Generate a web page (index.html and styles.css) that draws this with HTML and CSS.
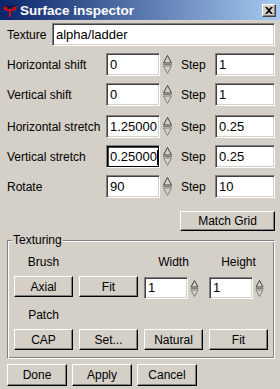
FILE: index.html
```html
<!DOCTYPE html>
<html>
<head>
<meta charset="utf-8">
<link rel="stylesheet" href="styles.css">
</head>
<body>
<div class="win">
  <div class="titlebar">
    <svg class="appicon" width="16" height="16" viewBox="0 0 16 16">
      <path d="M1 2 L3 5 L5 3 L6 7 L10 7 L11 3 L13 5 L15 2 L14 8 L9 9 L9 15 L7 15 L7 9 L2 8 Z" fill="#d01010"/>
      <path d="M1 2 L3 5 L5 3 L6 7 M10 7 L11 3 L13 5 L15 2" fill="none" stroke="#101050" stroke-width="1"/>
      <rect x="5" y="4" width="6" height="2" fill="#101050"/>
    </svg>
    <span class="title">Surface inspector</span>
    <span class="close">
      <svg width="8" height="7" viewBox="0 0 8 7"><path d="M0 0 L2 0 L4 2 L6 0 L8 0 L5 3.5 L8 7 L6 7 L4 5 L2 7 L0 7 L3 3.5 Z" fill="#000"/></svg>
    </span>
  </div>
  <div class="content">
    <div class="texrow">
      <span class="lbl">Texture</span>
      <div class="field">alpha/ladder</div>
    </div>

    <div class="prow">
      <span class="lbl">Horizontal shift</span>
      <div class="field">0</div>
      <svg class="spin" width="11" height="21" viewBox="0 0 11 21"><path d="M5.5 1.5 L9.5 9 L1.5 9 Z" fill="#d4d0c8" stroke="#404040"/><path d="M1.5 12 L9.5 12 L5.5 19.5 Z" fill="#d4d0c8" stroke="#808080"/><path d="M1 10.5 L10 10.5" stroke="#808080"/></svg>
      <span class="step">Step</span>
      <div class="field">1</div>
    </div>

    <div class="prow">
      <span class="lbl">Vertical shift</span>
      <div class="field">0</div>
      <svg class="spin" width="11" height="21" viewBox="0 0 11 21"><path d="M5.5 1.5 L9.5 9 L1.5 9 Z" fill="#d4d0c8" stroke="#404040"/><path d="M1.5 12 L9.5 12 L5.5 19.5 Z" fill="#d4d0c8" stroke="#808080"/><path d="M1 10.5 L10 10.5" stroke="#808080"/></svg>
      <span class="step">Step</span>
      <div class="field">1</div>
    </div>

    <div class="prow gap2">
      <span class="lbl">Horizontal stretch</span>
      <div class="field">1.25000</div>
      <svg class="spin" width="11" height="21" viewBox="0 0 11 21"><path d="M5.5 1.5 L9.5 9 L1.5 9 Z" fill="#d4d0c8" stroke="#404040"/><path d="M1.5 12 L9.5 12 L5.5 19.5 Z" fill="#d4d0c8" stroke="#808080"/><path d="M1 10.5 L10 10.5" stroke="#808080"/></svg>
      <span class="step">Step</span>
      <div class="field">0.25</div>
    </div>

    <div class="prow">
      <span class="lbl">Vertical stretch</span>
      <div class="field focus">0.25000<span class="caret"></span></div>
      <svg class="spin" width="11" height="21" viewBox="0 0 11 21"><path d="M5.5 1.5 L9.5 9 L1.5 9 Z" fill="#d4d0c8" stroke="#404040"/><path d="M1.5 12 L9.5 12 L5.5 19.5 Z" fill="#d4d0c8" stroke="#808080"/><path d="M1 10.5 L10 10.5" stroke="#808080"/></svg>
      <span class="step">Step</span>
      <div class="field">0.25</div>
    </div>

    <div class="prow">
      <span class="lbl">Rotate</span>
      <div class="field">90</div>
      <svg class="spin" width="11" height="21" viewBox="0 0 11 21"><path d="M5.5 1.5 L9.5 9 L1.5 9 Z" fill="#d4d0c8" stroke="#404040"/><path d="M1.5 12 L9.5 12 L5.5 19.5 Z" fill="#d4d0c8" stroke="#808080"/><path d="M1 10.5 L10 10.5" stroke="#808080"/></svg>
      <span class="step">Step</span>
      <div class="field">10</div>
    </div>

    <div class="gridrow">
      <div class="btn matchgrid">Match Grid</div>
    </div>

    <div class="group">
      <span class="legend">Texturing</span>
      <div class="ggrid">
        <span class="glbl">Brush</span>
        <span></span>
        <span class="glbl">Width</span>
        <span class="glbl">Height</span>
      </div>
      <div class="ggrid brow">
        <div class="btn">Axial</div>
        <div class="btn">Fit</div>
        <div class="spinbox">
          <div class="field small">1</div>
          <svg class="spin" width="9" height="21" viewBox="0 0 9 21"><path d="M4.5 2.5 L8 9 L1 9 Z" fill="#d4d0c8" stroke="#404040"/><path d="M1 12 L8 12 L4.5 18.5 Z" fill="#d4d0c8" stroke="#808080"/><path d="M0.5 10.5 L8.5 10.5" stroke="#808080"/></svg>
        </div>
        <div class="spinbox">
          <div class="field small">1</div>
          <svg class="spin" width="9" height="21" viewBox="0 0 9 21"><path d="M4.5 2.5 L8 9 L1 9 Z" fill="#d4d0c8" stroke="#404040"/><path d="M1 12 L8 12 L4.5 18.5 Z" fill="#d4d0c8" stroke="#808080"/><path d="M0.5 10.5 L8.5 10.5" stroke="#808080"/></svg>
        </div>
      </div>
      <div class="ggrid patchlbl">
        <span class="glbl">Patch</span>
      </div>
      <div class="ggrid brow">
        <div class="btn">CAP</div>
        <div class="btn">Set...</div>
        <div class="btn">Natural</div>
        <div class="btn">Fit</div>
      </div>
    </div>

    <div class="bottom">
      <div class="btn bb">Done</div>
      <div class="btn bb">Apply</div>
      <div class="btn bb">Cancel</div>
    </div>
  </div>
</div>
</body>
</html>
```

FILE: styles.css
```css
html, body {
  margin: 0;
  padding: 0;
  background: #d4d0c8;
}
body {
  font-family: "Liberation Sans", Arial, sans-serif;
  font-size: 12px;
  color: #000;
}
.win {
  width: 280px;
  height: 389px;
  background: #d4d0c8;
  overflow: hidden;
}
.titlebar {
  height: 20px;
  display: flex;
  align-items: center;
  background: linear-gradient(to right, #0a246a, #a6caf0);
  padding: 0 4px 0 2px;
}
.appicon {
  display: block;
  flex: none;
}
.title {
  margin-left: 2px;
  color: #fff;
  font-weight: bold;
  font-size: 13.5px;
  flex: 1;
}
.close {
  width: 14px;
  height: 13px;
  box-sizing: border-box;
  background: #d4d0c8;
  border: 1px solid;
  border-color: #fff #404040 #404040 #fff;
  box-shadow: inset -1px -1px 0 #808080;
  display: flex;
  align-items: center;
  justify-content: center;
}
.close svg { display: block; }
.content {
  padding: 3px 5px 0 7px;
}
.lbl {
  white-space: nowrap;
}
.field {
  box-sizing: border-box;
  height: 23px;
  background: #fff;
  border: 1px solid;
  border-color: #808080 #fff #fff #808080;
  box-shadow: inset 1px 1px 0 #404040, inset -1px -1px 0 #d4d0c8;
  padding: 0 3px;
  font-size: 13px;
  line-height: 21px;
  white-space: nowrap;
  overflow: hidden;
}
.field.focus {
  box-shadow: inset 1px 1px 0 #000, inset -1px -1px 0 #000, inset 2px 2px 0 #404040;
}
.caret {
  display: inline-block;
  width: 1px;
  height: 15px;
  background: #000;
  vertical-align: middle;
}
.texrow {
  display: grid;
  grid-template-columns: 45px 1fr;
  align-items: center;
  height: 23px;
}
.prow {
  display: grid;
  grid-template-columns: 99px 54px 14px 41px 60px;
  align-items: center;
  height: 23px;
  margin-top: 7px;
}
.prow.gap2 { margin-top: 9px; }
.spin {
  display: block;
  justify-self: center;
}
.step {
  padding-left: 7px;
}
.gridrow {
  display: flex;
  justify-content: flex-end;
  margin-top: 13px;
}
.btn {
  box-sizing: border-box;
  background: #d4d0c8;
  border: 1px solid;
  border-color: #fff #000 #000 #fff;
  box-shadow: inset -1px -1px 0 #808080;
  display: flex;
  align-items: center;
  justify-content: center;
  height: 21px;
  font-size: 12px;
}
.matchgrid {
  width: 95px;
  height: 20px;
}
.group {
  position: relative;
  margin-top: 9px;
  width: 268px;
  box-sizing: border-box;
  border: 1px solid;
  border-color: #808080 #fff #fff #808080;
  box-shadow: inset 1px 1px 0 #fff, inset -1px -1px 0 #808080;
  padding: 14px 6px 8px 6px;
}
.legend {
  position: absolute;
  top: -8px;
  left: 4px;
  padding: 0 1px;
  background: #d4d0c8;
  line-height: 14px;
}
.ggrid {
  display: grid;
  grid-template-columns: 59px 59px 59px 59px;
  column-gap: 6px;
  align-items: start;
}
.glbl {
  text-align: center;
  line-height: 14px;
  height: 14px;
}
.brow {
  margin-top: 7px;
}
.patchlbl {
  margin-top: 9px;
}
.spinbox {
  display: flex;
  align-items: center;
  gap: 2px;
  margin-top: 1px;
}
.spinbox .field.small {
  width: 44px;
  height: 22px;
  line-height: 20px;
}
.bottom {
  display: flex;
  gap: 5px;
  margin-top: 5px;
}
.bb {
  width: 60px;
  height: 22px;
}
```
